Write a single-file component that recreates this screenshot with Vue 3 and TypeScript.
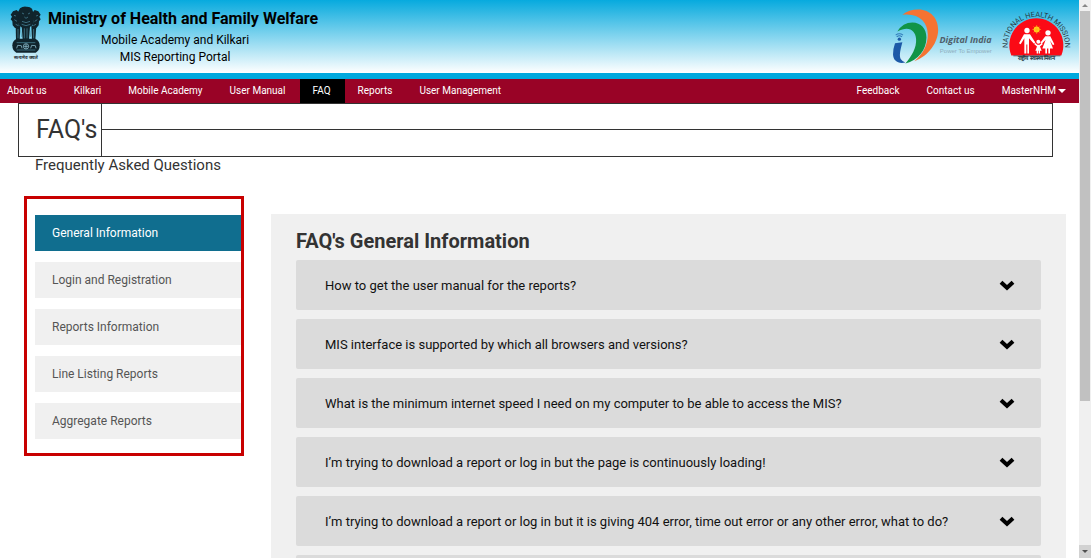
<script setup lang="ts">
import { ref } from 'vue'

interface Question {
  id: number
  text: string
}

const leftLinks: string[] = ['About us', 'Kilkari', 'Mobile Academy', 'User Manual', 'FAQ', 'Reports', 'User Management']
const rightLinks: string[] = ['Feedback', 'Contact us']
const activeLink = ref('FAQ')

const categories: string[] = [
  'General Information',
  'Login and Registration',
  'Reports Information',
  'Line Listing Reports',
  'Aggregate Reports',
]
const activeCategory = ref(categories[0])

const questions: Question[] = [
  { id: 1, text: 'How to get the user manual for the reports?' },
  { id: 2, text: 'MIS interface is supported by which all browsers and versions?' },
  { id: 3, text: 'What is the minimum internet speed I need on my computer to be able to access the MIS?' },
  { id: 4, text: 'I’m trying to download a report or log in but the page is continuously loading!' },
  { id: 5, text: 'I’m trying to download a report or log in but it is giving 404 error, time out error or any other error, what to do?' },
  { id: 6, text: '' },
]
</script>

<template>
  <div class="window">
    <div class="page">
      <header class="banner">
        <div class="brand">
          <svg class="emblem" viewBox="30 14 96 168" role="img" aria-label="State Emblem of India">
            <g fill="#10242c">
              <path d="M60 24q8-6 18-5 12-1 18 6l4 12 2 20-4 18-14 8H68l-12-8-5-20 3-20z" />
              <path d="M50 29l-11 4-7 10 4 6-4 8 5 6 1 12 7 8h12l-2-24 3-22z" />
              <path d="M104 29l11 4 7 10-4 6 4 8-5 6-1 12-7 8H98l2-24-3-22z" />
              <path d="M47 76h14l-2 42H48z" />
              <path d="M65 78h25l-3 40H68z" />
              <path d="M94 76h15l-3 42H96z" />
              <path d="M50 115h56q13 6 13 20 0 16-12 22H49q-12-6-12-22 0-14 13-20z" />
            </g>
            <g fill="none" stroke="#4f8ea5" stroke-width="2">
              <path d="M66 38l6 3M90 38l-6 3M73 50l5 4 6-4M66 63q12 8 24 0M65 72q13 8 26 0M42 45l6 2M114 45l-6 2M43 58l8 5M112 58l-8 5M47 72l8 4M108 72l-8 4" />
              <path d="M54 86v28M73 84v30M81 84v30M101 86v28M62 90l3 20M93 90l-2 20" />
              <path d="M50 127h56M50 149h56" stroke="#4f8ea5" />
              <circle cx="78" cy="138" r="8" stroke="#a2d8ea" />
              <path d="M78 131v14M71 138h14M50 144l3-9 11 1 2 8M92 144l3-9 11 1 2 8" stroke="#a2d8ea" />
            </g>
            <text x="78" y="176" text-anchor="middle" font-size="14" font-weight="700" fill="#1c2a30">सत्यमेव जयते</text>
          </svg>
          <div class="brand-text">
            <h1>Ministry of Health and Family Welfare</h1>
            <p>Mobile Academy and Kilkari</p>
            <p>MIS Reporting Portal</p>
          </div>
        </div>
        <div class="logos">
          <svg class="digital" viewBox="60 24 320 170" role="img" aria-label="Digital India, Power To Empower">
            <path fill="#f57332" d="M97 44Q116 28 145 28C181 28 204 55 204 88C204 126 177 166 133 183C159 160 173 134 173 103C173 66 146 37 97 44Z" />
            <path fill="#119447" d="M82 94Q98 67 127 67C153 67 169 86 169 112C169 148 145 180 106 190C125 168 140 143 138 116C136 91 117 75 82 94Z" />
            <path fill="#1c59a7" d="M75 129L97 126C91 148 87 166 92 176Q96 182 106 187C83 192 70 181 69 163Q68 149 75 129Z" />
            <circle cx="88" cy="117" r="5" fill="#1c59a7" />
            <path d="M80 110q8-7 16 0M77 105q11-8 22 0" fill="none" stroke="#2e78b8" stroke-width="3" />
            <text x="208" y="129" font-family="Open Sans, sans-serif" font-size="27" font-weight="700" font-style="italic" fill="#50606b">Digital India</text>
            <text x="209" y="157" font-family="Liberation Sans, sans-serif" font-size="18" fill="#91aebc">Power To Empower</text>
          </svg>
          <svg class="nhm" viewBox="395 30 210 155" role="img" aria-label="National Health Mission">
            <defs>
              <path id="nhm-arc" d="M419 170A86 86 0 1 1 577 170" />
            </defs>
            <path fill="#fb0a16" d="M423 166A81 81 0 1 1 573 166Z" />
            <text font-size="22" fill="#263943"><textPath href="#nhm-arc" startOffset="50%" text-anchor="middle">NATIONAL HEALTH MISSION</textPath></text>
            <circle cx="499" cy="88" r="9" fill="#ffd21c" />
            <path d="M499 75v26M486 88h26M490 79l18 18M508 79l-18 18" stroke="#ffb317" stroke-width="2" />
            <g fill="#fff">
              <circle cx="470" cy="91" r="8" />
              <path d="M461 102h18l16 25-4 4-15-17v46h-5v-27h-3v27h-6v-46l-11 18-5-3z" />
              <circle cx="533" cy="98" r="8" />
              <path d="M525 108h15l12 24-4 3-9-14 9 24h-9v15h-5v-15h-4v15h-5v-15h-9l10-26-12 12-4-3z" />
              <circle cx="504" cy="125" r="6" />
              <path d="M494 128l7 6h7l7-6 2 4-8 7 5 13h-5v8h-4v-8h-2v8h-4v-8h-4l5-13-8-7z" />
            </g>
            <path d="M429 167H570" stroke="#263943" stroke-width="2" />
            <text x="499" y="180" text-anchor="middle" font-size="17" font-weight="700" fill="#263943">राष्ट्रीय स्वास्थ्य मिशन</text>
          </svg>
        </div>
      </header>

      <nav class="menu" aria-label="Main">
        <a v-for="link in leftLinks" :key="link" href="#" :class="{ active: link === activeLink }" @click.prevent="activeLink = link">{{ link }}</a>
        <span class="spacer"></span>
        <a v-for="link in rightLinks" :key="link" href="#" @click.prevent="activeLink = link">{{ link }}</a>
        <button type="button" class="account" aria-haspopup="true">MasterNHM<span class="caret"></span></button>
      </nav>

      <section class="heading">
        <div class="title-box">
          <h2>FAQ's</h2>
          <div class="title-lines"><span></span><span></span></div>
        </div>
        <p>Frequently Asked Questions</p>
      </section>

      <div class="content">
        <aside class="categories">
          <button
            v-for="category in categories"
            :key="category"
            type="button"
            :class="{ active: category === activeCategory }"
            @click="activeCategory = category"
          >{{ category }}</button>
        </aside>

        <main class="panel">
          <h3>FAQ's {{ activeCategory }}</h3>
          <div class="questions">
            <button v-for="question in questions" :key="question.id" type="button" aria-expanded="false">
              <span>{{ question.text }}</span>
              <svg viewBox="0 0 16 11" aria-hidden="true"><path d="M2 2.2l6 5.6 6-5.6" fill="none" stroke="#000" stroke-width="4" /></svg>
            </button>
          </div>
        </main>
      </div>
    </div>

    <div class="scrollbar" aria-hidden="true">
      <span class="arrow up"></span>
      <div class="track"><span class="thumb"></span></div>
      <span class="arrow down"></span>
    </div>
  </div>
</template>

<style>
body {
  margin: 0;
}
</style>

<style scoped>
.window {
  display: flex;
  height: 100vh;
  overflow: hidden;
  background: #fff;
  font-family: Roboto, "Liberation Sans", sans-serif;
  color: #333;
}

h1,
h2,
h3,
p {
  margin: 0;
  font-weight: 400;
}

button {
  border: 0;
  font-family: inherit;
  text-align: left;
  cursor: pointer;
}

.page {
  flex: 1;
  min-width: 0;
  overflow: hidden;
}

.banner {
  display: flex;
  justify-content: space-between;
  height: 73px;
  border-bottom: 6px solid #00a9de;
  background: linear-gradient(#07aade, #fff);
}

.brand {
  display: flex;
  gap: 6px;
  padding: 5px 0 0 10px;
}

.emblem {
  width: 32px;
  height: 56px;
}

.brand-text {
  padding-top: 4px;
  color: #000;
}

.brand-text h1 {
  font-size: 16px;
  font-weight: 700;
  line-height: 20px;
}

.brand-text p {
  margin-right: 16px;
  font-size: 12px;
  line-height: 17px;
  text-align: center;
}

.brand-text h1 + p {
  padding-top: 3px;
}

.logos {
  display: flex;
  align-items: flex-start;
  gap: 5px;
  padding: 8px 7px 0 0;
}

.digital {
  width: 107px;
  height: 57px;
}

.nhm {
  width: 70px;
  height: 52px;
  margin-top: 2px;
  overflow: visible;
}

.menu {
  display: flex;
  height: 24px;
  background: #990326;
}

.menu a,
.account {
  padding: 0 14px 0 13px;
  background: transparent;
  color: #fff;
  font-size: 10px;
  line-height: 23px;
  text-decoration: none;
  white-space: nowrap;
}

.menu a:first-child {
  padding-left: 7px;
}

.menu a.active {
  background: #000;
}

.spacer {
  flex: 1;
}

.account {
  display: flex;
  align-items: center;
  gap: 2px;
  padding: 0 13px 1px;
}

.caret {
  border: 4px solid transparent;
  border-top-color: #fff;
  border-bottom: 0;
}

.title-box {
  display: flex;
  height: 52px;
  margin: 0 26px 0 18px;
  border: 1px solid #333;
}

.title-box h2 {
  padding: 0 4px 0 17px;
  border-right: 1px solid #333;
  font-size: 25px;
  line-height: 52px;
}

.title-lines {
  display: grid;
  flex: 1;
  grid-template-rows: 1fr 1fr;
}

.title-lines span:first-child {
  border-bottom: 1px solid #333;
}

.heading p {
  padding-left: 35px;
  font-size: 15px;
  line-height: 16px;
}

.content {
  display: grid;
  grid-template-columns: 220px 1fr;
  gap: 27px;
  align-items: start;
  padding: 23px 13px 0 24px;
}

.categories {
  display: flex;
  flex-direction: column;
  gap: 11px;
  padding: 16px 0 14px 8px;
  border: 3px solid #c80000;
}

.categories button {
  height: 36px;
  padding: 0 17px 1px;
  background: #f0f0f0;
  color: #555;
  font-size: 12px;
}

.categories button.active {
  background: #106e8f;
  color: #fff;
}

.panel {
  margin-top: 18px;
  padding: 12px 25px 20px;
  background: #f0f0f0;
}

.panel h3 {
  font-size: 20px;
  font-weight: 700;
  line-height: 30px;
}

.questions {
  display: flex;
  flex-direction: column;
  gap: 9px;
  padding-top: 4px;
}

.questions button {
  display: flex;
  align-items: center;
  justify-content: space-between;
  height: 50px;
  padding: 0 26px 0 29px;
  border-radius: 2px;
  background: #dbdbdb;
  color: #111;
  font-size: 13px;
}

.questions svg {
  width: 16px;
  height: 11px;
}

.scrollbar {
  display: flex;
  flex-direction: column;
  width: 12px;
  background: #f0f0f0;
}

.arrow {
  display: flex;
  align-items: center;
  justify-content: center;
  height: 11px;
}

.arrow::before {
  border: 3px solid transparent;
  content: "";
}

.arrow.up::before {
  border-top: 0;
  border-bottom-color: #888;
}

.arrow.down {
  height: 13px;
  background: #d2d2d2;
}

.arrow.down::before {
  border-top-color: #505050;
  border-bottom: 0;
}

.track {
  flex: 1;
}

.thumb {
  display: block;
  height: 73%;
  margin: 0 1px;
  background: #c1c1c1;
}
</style>
